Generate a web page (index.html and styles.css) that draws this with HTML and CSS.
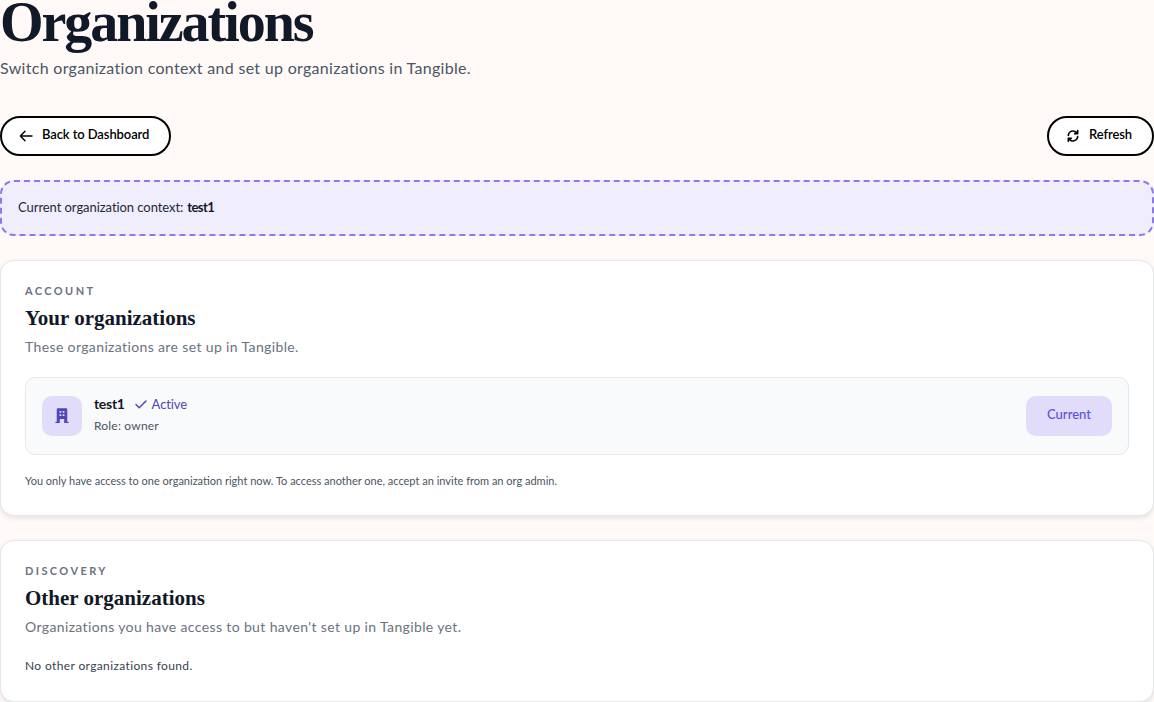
FILE: index.html
```html
<!DOCTYPE html>
<html lang="en">
<head>
<meta charset="utf-8">
<title>Organizations</title>
<link rel="stylesheet" href="styles.css">
</head>
<body>
<main class="page">
  <header class="head">
    <h1 class="title">Organizations</h1>
    <p class="subtitle">Switch organization context and set up organizations in Tangible.</p>
  </header>
  <div class="actions">
    <button class="btn">
      <svg class="icon" viewBox="0 0 24 24" fill="none" stroke="currentColor" stroke-width="2.2" stroke-linecap="round" stroke-linejoin="round"><path d="M21 12H3.500M10.500 5l-7 7 7 7"/></svg>
      Back to Dashboard
    </button>
    <button class="btn">
      <svg class="icon" viewBox="0 0 24 24" fill="none" stroke="currentColor" stroke-width="2.500" stroke-linecap="round" stroke-linejoin="round"><path d="M5 11a7 7 0 0 1 7-6.500 7.600 7.600 0 0 1 5.200 2.200L19 8.500M19 4v4.500h-4.500M19 13a7 7 0 0 1-7 6.500 7.600 7.600 0 0 1-5.200-2.200L5 15.500M9.500 15.500H5V20"/></svg>
      Refresh
    </button>
  </div>
  <div class="context">Current organization context: <strong>test1</strong></div>
  <section class="card card-account">
    <div class="eyebrow">ACCOUNT</div>
    <h2 class="card-title">Your organizations</h2>
    <p class="card-sub">These organizations are set up in Tangible.</p>
    <div class="org">
      <div class="org-icon">
        <svg viewBox="0 0 16 18" width="14" height="16"><path fill="#4f46b8" fill-rule="evenodd" d="M3 0h10a1 1 0 0 1 1 1v14.500h1.500V17H10.500v-4.500h-5V17H.5v-1.500H2V1a1 1 0 0 1 1-1zM5.200 3.200v2h2v-2zm3.600 0v2h2v-2zM5.200 7v2h2V7zm3.600 0v2h2V7z"/></svg>
      </div>
      <div class="org-info">
        <div class="org-line">
          <span class="org-name">test1</span>
          <span class="status">
            <svg viewBox="0 0 14 14" width="14" height="14" fill="none" stroke="currentColor" stroke-width="1.500" stroke-linecap="round" stroke-linejoin="round"><path d="M2 7.500l3.200 3.200L12 4"/></svg>
            Active
          </span>
        </div>
        <div class="org-role">Role: owner</div>
      </div>
      <div class="current">Current</div>
    </div>
    <p class="note">You only have access to one organization right now. To access another one, accept an invite from an org admin.</p>
  </section>
  <section class="card card-other">
    <div class="eyebrow">DISCOVERY</div>
    <h2 class="card-title">Other organizations</h2>
    <p class="card-sub">Organizations you have access to but haven't set up in Tangible yet.</p>
    <p class="empty">No other organizations found.</p>
  </section>
</main>
</body>
</html>
```
FILE: styles.css
```css
* { box-sizing: border-box; }
html, body { margin: 0; height: 702px; overflow: hidden; }
body { background: #fffaf7; font-family: "Lato", "Noto Sans", sans-serif; color: #111827; }
.page { display: flex; flex-direction: column; }
.title { margin: 0; font-family: "Liberation Serif", serif; font-weight: 700; font-size: 56px; line-height: 44px; letter-spacing: -2.05px; color: #111827; }
.subtitle { margin: 12px 0 0; font-size: 16px; line-height: 24px; color: #4b5563; letter-spacing: .3px; }
.actions { display: flex; justify-content: space-between; margin-top: 36px; }
.btn { display: inline-flex; align-items: center; gap: 8px; height: 40px; padding: 0 20px 4px 16px; background: #fff; border: 2px solid #000; border-radius: 20px; font: 600 13px "Lato", sans-serif; color: #000; letter-spacing: -.1px; }
.icon { width: 16px; height: 16px; margin-top: 4px; }
.context { margin-top: 24px; height: 56px; padding: 0 16px 3px; display: flex; align-items: center; gap: 4px; background: #f0edfc; border: 2px dashed #8b7ae8; border-radius: 14px; font-size: 13px; color: #1f2937; letter-spacing: -.06px; }
.context strong { font-weight: 700; letter-spacing: -.6px; color: #111827; }
.card { margin-top: 24px; padding: 22px 24px 0; background: #fff; border: 1px solid #e5e7eb; border-radius: 14px; box-shadow: 0 2px 5px rgba(0,0,0,.1); flex: none; }
.card-account { height: 256px; }
.card-other { height: 162px; }
.eyebrow { font-size: 11px; line-height: 16px; font-weight: 700; letter-spacing: 2.4px; color: #6b7280; }
.card-title { margin: 5px 0 0; font-family: "Liberation Serif", serif; font-weight: 700; font-size: 21px; line-height: 28px; color: #111827; }
.card-sub { margin: 5px 0 0; font-size: 14px; line-height: 20px; color: #6b7280; letter-spacing: .37px; }
.org { display: flex; align-items: center; gap: 12px; margin-top: 20px; height: 78px; padding: 0 16px; background: #f9fafb; border: 1px solid #e5e7eb; border-radius: 10px; }
.org-icon { width: 40px; height: 40px; border-radius: 10px; background: #e2dcfb; display: flex; align-items: center; justify-content: center; }
.org-info { flex: 1; padding-bottom: 3px; }
.org-line { display: flex; align-items: center; gap: 9px; line-height: 20px; }
.org-name { font-size: 14px; font-weight: 700; letter-spacing: -.3px; color: #111827; }
.status { display: inline-flex; align-items: center; gap: 4px; font-size: 13px; color: #4f46b8; letter-spacing: -.1px; }
.org-role { margin-top: 3px; font-size: 12px; line-height: 18px; color: #4b5563; letter-spacing: .2px; }
.current { width: 86px; height: 40px; padding-bottom: 5px; display: flex; align-items: center; justify-content: center; border-radius: 10px; background: #e2dcfb; color: #5b52d6; font-size: 13px; font-weight: 500; }
.note { margin: 18px 0 0; font-size: 11px; line-height: 16px; color: #4b5563; }
.empty { margin: 20px 0 0; font-size: 12px; line-height: 18px; color: #374151; letter-spacing: .37px; }
```
